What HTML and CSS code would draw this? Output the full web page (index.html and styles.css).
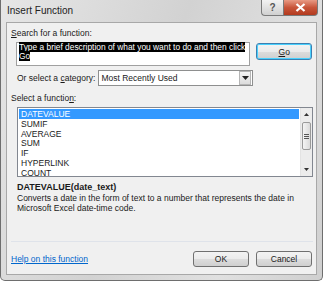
FILE: index.html
```html
<!DOCTYPE html>
<html lang="en">

<head>
    <meta charset="UTF-8">
    <title>Insert Function</title>
    <link rel="stylesheet" href="styles.css">
</head>

<body>
    <div class="window">
        <!-- Title bar -->
        <div class="title-bar">
            <span class="title">Insert Function</span>
            <div class="caption-btns">
                <span class="cap-btn help">?</span>
                <span class="cap-btn close">
                    <svg width="11" height="9" viewBox="0 0 11 9">
                        <path d="M1.5 1 L9.5 8 M9.5 1 L1.5 8" stroke="#fff" stroke-width="2.2" fill="none" />
                    </svg>
                </span>
            </div>
        </div>

        <div class="panel">
            <div class="label"><u>S</u>earch for a function:</div>
            <div class="search-row">
                <div class="search-box">
                    <span class="sel-text">Type a brief description of what you want to do and then click<br>Go</span>
                </div>
                <button class="btn default"><u>G</u>o</button>
            </div>

            <div class="category-row">
                <span class="label">Or select a <u>c</u>ategory:</span>
                <div class="select">
                    <span>Most Recently Used</span>
                    <span class="drop">
                        <svg width="7" height="4" viewBox="0 0 7 4"><path d="M0 0 H7 L3.5 4 Z" fill="#222" /></svg>
                    </span>
                </div>
            </div>

            <div class="label fn-label">Select a functio<u>n</u>:</div>
            <div class="listbox">
                <ul class="items">
                    <li class="active">DATEVALUE</li>
                    <li>SUMIF</li>
                    <li>AVERAGE</li>
                    <li>SUM</li>
                    <li>IF</li>
                    <li>HYPERLINK</li>
                    <li>COUNT</li>
                </ul>
                <div class="scrollbar">
                    <span class="arrow">
                        <svg width="5" height="3" viewBox="0 0 5 3"><path d="M0 3 H5 L2.5 0 Z" fill="#333" /></svg>
                    </span>
                    <div class="track">
                        <div class="thumb">
                            <span></span><span></span><span></span>
                        </div>
                    </div>
                    <span class="arrow">
                        <svg width="5" height="3" viewBox="0 0 5 3"><path d="M0 0 H5 L2.5 3 Z" fill="#333" /></svg>
                    </span>
                </div>
            </div>

            <div class="signature">DATEVALUE(date_text)</div>
            <p class="desc">Converts a date in the form of text to a number that represents the date in Microsoft Excel date-time code.</p>

            <div class="separator"></div>

            <div class="bottom-row">
                <a href="#" class="help-link">Help on this function</a>
                <div class="actions">
                    <button class="btn">OK</button>
                    <button class="btn">Cancel</button>
                </div>
            </div>
        </div>
    </div>
</body>

</html>
```

FILE: styles.css
```css
body {
    margin: 0;
    background-color: #fff;
    font-family: "Liberation Sans", Arial, sans-serif;
    font-size: 8.5px;
    color: #1a1a1a;
}

.window {
    width: 321px;
    height: 280px;
    border: 1px solid #6e6e6e;
    border-top: none;
    border-radius: 0 0 5px 5px;
    background: linear-gradient(110deg, #e6e6e6 0%, #d2d2d2 45%, #e0e0e0 75%, #cfcfcf 100%);
    display: flex;
    flex-direction: column;
}

/* Title bar */
.title-bar {
    height: 22px;
    display: flex;
    align-items: flex-start;
    justify-content: space-between;
    padding-left: 6px;
}

.title {
    font-size: 10px;
    line-height: 22px;
    color: #222;
}

.caption-btns {
    display: flex;
    margin-right: 4px;
}

.cap-btn {
    height: 15px;
    display: flex;
    justify-content: center;
    align-items: center;
    border: 1px solid #7a7a7a;
    border-top: none;
}

.cap-btn.help {
    width: 21px;
    border-right: none;
    border-radius: 0 0 0 4px;
    background: linear-gradient(#f2f2f2, #d0d0d0);
    color: #555;
    font-size: 10px;
    font-weight: bold;
}

.cap-btn.close {
    width: 33px;
    border-radius: 0 0 4px 0;
    background: linear-gradient(#e89a84, #c8553a 50%, #b23a1e);
}

/* Main panel */
.panel {
    flex: 1;
    margin: 0 5px 5px 5px;
    border: 1px solid #a8a8a8;
    background-color: #f0f0f0;
    padding: 5px 4px 0 4px;
    display: flex;
    flex-direction: column;
}

.label {
    line-height: 10px;
}

.search-row {
    display: flex;
    align-items: flex-start;
    margin: 4px 0 0 5px;
}

.search-box {
    width: 230px;
    height: 22px;
    border: 1px solid #a0a0a0;
    background-color: #fff;
    padding: 0 2px;
    line-height: 9px;
}

.sel-text {
    background-color: #000;
    color: #fff;
    font-size: 8.4px;
}

.btn {
    font-family: "Liberation Sans", Arial, sans-serif;
    font-size: 8.5px;
    color: #1a1a1a;
    width: 56px;
    height: 16px;
    padding: 0;
    border: 1px solid #707070;
    border-radius: 3px;
    background: linear-gradient(#f3f3f3 0%, #ebebeb 50%, #dddddd 51%, #cfcfcf 100%);
}

.btn.default {
    margin: 1px 0 0 6px;
    height: 17px;
    border-color: #3c7fb1;
    box-shadow: inset 0 0 0 1px #48d0fd;
}

.category-row {
    display: flex;
    align-items: center;
    margin: 4px 0 0 6px;
}

.select {
    width: 151px;
    height: 14px;
    margin-left: 3px;
    border: 1px solid #8e8f8f;
    background-color: #fff;
    display: flex;
    align-items: center;
    justify-content: space-between;
    padding-left: 2px;
}

.drop {
    width: 10px;
    height: 12px;
    margin-right: 1px;
    border: 1px solid #b5b5b5;
    background: linear-gradient(#f4f4f4, #dcdcdc);
    display: flex;
    justify-content: center;
    align-items: center;
}

.fn-label {
    margin-top: 7px;
}

.listbox {
    width: 294px;
    height: 68px;
    margin: 4px 0 0 6px;
    border: 1px solid #828790;
    background-color: #fff;
    display: flex;
}

.items {
    list-style: none;
    margin: 0;
    padding: 1px 1px 0 1px;
    flex: 1;
}

.items li {
    height: 9.8px;
    line-height: 10px;
    padding-left: 2px;
}

.items li.active {
    background-color: #3399ff;
    color: #fff;
}

.scrollbar {
    width: 11px;
    background-color: #ececec;
    border-left: 1px solid #e3e3e3;
    display: flex;
    flex-direction: column;
}

.scrollbar .arrow {
    height: 13px;
    display: flex;
    justify-content: center;
    align-items: center;
}

.track {
    flex: 1;
}

.thumb {
    margin: 1px 1px 0 1px;
    height: 26px;
    border: 1px solid #9a9a9a;
    border-radius: 2px;
    background: linear-gradient(90deg, #f4f4f4, #dadada);
    display: flex;
    flex-direction: column;
    justify-content: center;
    align-items: center;
    gap: 1px;
}

.thumb span {
    width: 5px;
    height: 1px;
    background-color: #555;
}

.signature {
    margin: 5px 0 0 6px;
    font-weight: bold;
    font-size: 9px;
    line-height: 10px;
}

.desc {
    margin: 1px 0 0 6px;
    line-height: 10px;
}

.separator {
    margin-top: auto;
    height: 1px;
    width: 302px;
    background-color: #dfe3ea;
}

.bottom-row {
    height: 32px;
    display: flex;
    justify-content: space-between;
    align-items: flex-start;
    padding-top: 9px;
    box-sizing: border-box;
}

.help-link {
    color: #0066cc;
    margin-top: 3px;
    line-height: 10px;
}

.actions {
    display: flex;
    gap: 7px;
}
```
